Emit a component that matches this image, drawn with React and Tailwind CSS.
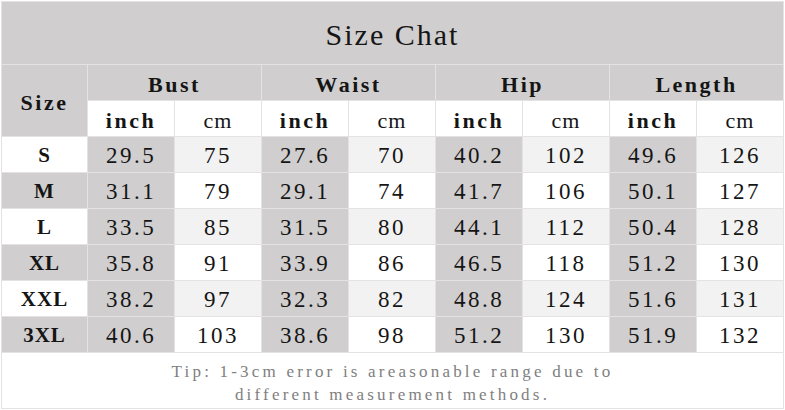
import React from "react";

const rows = [
  { size: "S", v: ["29.5", "75", "27.6", "70", "40.2", "102", "49.6", "126"] },
  { size: "M", v: ["31.1", "79", "29.1", "74", "41.7", "106", "50.1", "127"] },
  { size: "L", v: ["33.5", "85", "31.5", "80", "44.1", "112", "50.4", "128"] },
  { size: "XL", v: ["35.8", "91", "33.9", "86", "46.5", "118", "51.2", "130"] },
  { size: "XXL", v: ["38.2", "97", "32.3", "82", "48.8", "124", "51.6", "131"] },
  { size: "3XL", v: ["40.6", "103", "38.6", "98", "51.2", "130", "51.9", "132"] },
];

const groups = ["Bust", "Waist", "Hip", "Length"];

function Cell({ className = "", children }) {
  return (
    <div className={`flex items-center justify-center pt-[3px] ${className}`}>
      {children}
    </div>
  );
}

export default function App() {
  return (
    <div className="w-[785px] h-[410px] bg-white p-px text-[#151515] font-['Liberation_Serif',serif]">
      <div className="grid grid-cols-[85px_repeat(8,86px)] grid-rows-[62px_35px_35px_repeat(6,35px)_55px] gap-px p-px bg-[#e3e3e3]">
        <Cell className="col-span-9 bg-[#d0cece] text-[30px] tracking-[2px]">
          Size Chat
        </Cell>

        <Cell className="row-span-2 bg-[#d0cece] text-[22px] font-bold tracking-[2.5px]">
          Size
        </Cell>
        {groups.map((g) => (
          <Cell key={g} className="col-span-2 bg-[#d0cece] text-[22px] font-bold tracking-[2.5px]">
            {g}
          </Cell>
        ))}
        {groups.map((g) => (
          <React.Fragment key={g + "-units"}>
            <Cell className="bg-white text-[22px] font-bold tracking-[2.5px]">inch</Cell>
            <Cell className="bg-white text-[22px] tracking-[1px]">cm</Cell>
          </React.Fragment>
        ))}

        {rows.map((r, i) => (
          <React.Fragment key={r.size}>
            <Cell
              className={`text-[21px] font-bold tracking-[1px] ${
                i % 2 === 0 ? "bg-white" : "bg-[#d0cece]"
              }`}
            >
              {r.size}
            </Cell>
            {r.v.map((val, j) => (
              <Cell
                key={j}
                className={`text-[23px] tracking-[2.5px] ${
                  j % 2 === 0
                    ? "bg-[#d0cece]"
                    : i % 2 === 0
                    ? "bg-[#f2f2f2]"
                    : "bg-white"
                }`}
              >
                {val}
              </Cell>
            ))}
          </React.Fragment>
        ))}

        {/* footnote */}
        <div className="col-span-9 bg-white flex flex-col items-center justify-center text-[17px] leading-[23px] tracking-[3.2px] text-[#808080] pt-[4px]">
          <span>Tip: 1-3cm error is areasonable range due to</span>
          <span>different measurement methods.</span>
        </div>
      </div>
    </div>
  );
}
